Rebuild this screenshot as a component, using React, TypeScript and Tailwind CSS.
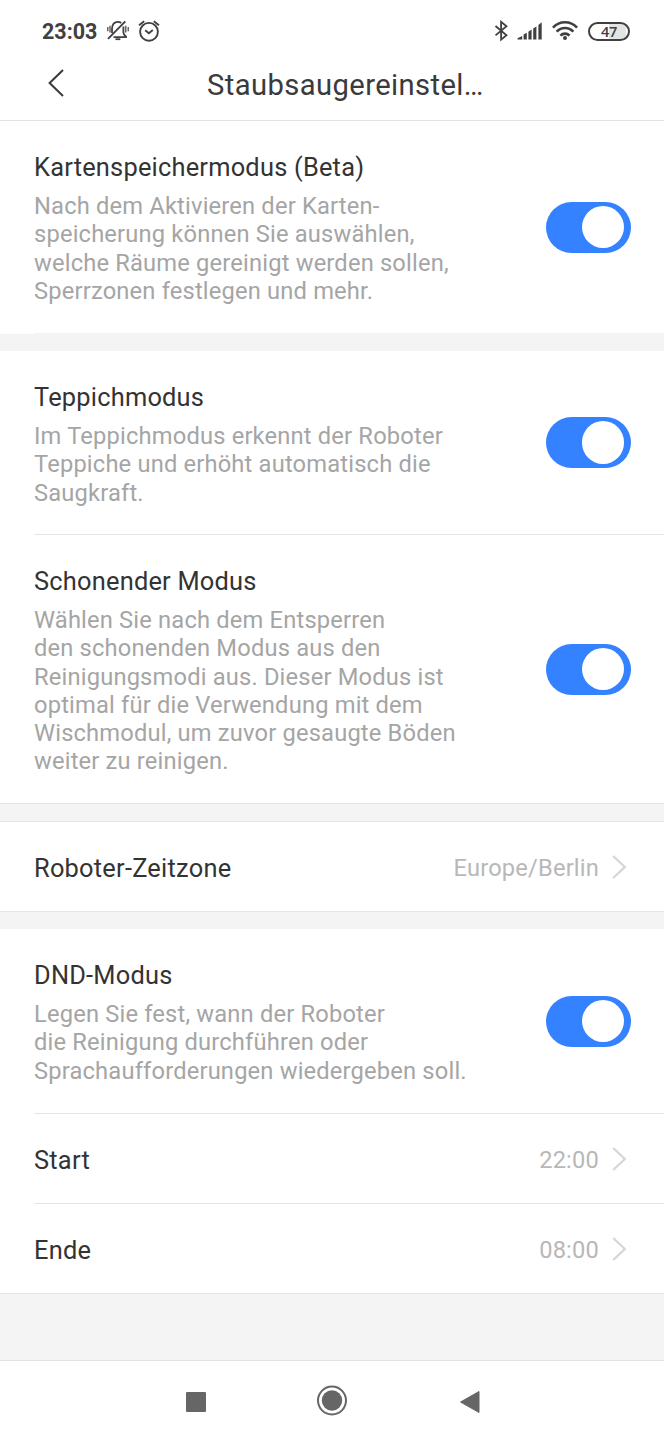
import { useState } from 'react';
import clsx from 'clsx';

interface ToggleRowProps {
  title: string;
  lines: string[];
  className?: string;
}

function Switch() {
  const [on, setOn] = useState(true);
  return (
    <button
      role="switch"
      aria-checked={on}
      onClick={() => setOn(!on)}
      className={clsx(
        'flex h-[51px] w-[84.5px] shrink-0 items-center rounded-full px-[6.5px]',
        on ? 'justify-end bg-[#3482ff]' : 'justify-start bg-[#d9d9d9]'
      )}
    >
      <span className="size-[42.5px] rounded-full bg-white" />
    </button>
  );
}

function ToggleRow({ title, lines, className }: ToggleRowProps) {
  return (
    <div className={clsx('flex items-center justify-between bg-white pr-[33.3px] pl-[34px]', className)}>
      <div className="self-start pt-[31px]">
        <h2 className="text-[25.4px] leading-[30px] tracking-[0.22px] text-[#333]">{title}</h2>
        <p className="mt-[10px] text-[23.7px] leading-[28.25px] tracking-[0.18px] whitespace-nowrap text-[#a5a5a5]">
          {lines.map((line) => (
            <span key={line} className="block">
              {line}
            </span>
          ))}
        </p>
      </div>
      <Switch />
    </div>
  );
}

function LinkRow({ title, value }: { title: string; value: string }) {
  return (
    <div className="flex h-[89px] items-center bg-white pr-[37px] pl-[34px]">
      <span className="flex-1 pt-[2px] text-[25.4px] leading-[30px] tracking-[0.24px] text-[#333]">{title}</span>
      <span className="pt-[2px] text-[23.7px] leading-[28px] tracking-[0.17px] text-[#b8b8b8]">{value}</span>
      <svg className="ml-[13px] h-6 w-[15px]" viewBox="0 0 15 24" fill="none" stroke="#d6d6d6" strokeWidth="2.3">
        <path d="M1.2 1 12.8 12 1.2 23" />
      </svg>
    </div>
  );
}

function Divider() {
  return (
    <div className="bg-white pl-[34px]">
      <div className="h-px bg-[#e5e5e5]" />
    </div>
  );
}

function StatusBar() {
  return (
    <div className="flex h-[50px] items-center pt-[12px] pr-[34px] pl-[42px] text-[#404040]">
      <span className="w-[65px] pt-px text-[21.5px] leading-[26px] font-bold">23:03</span>
      <svg className="h-[22px] w-[22px]" viewBox="0 0 22 22" fill="none" stroke="currentColor" strokeWidth="1.8">
        <path d="M1 18.8 18.3 1.3" strokeWidth="1.9" />
        <path d="M5 13V8.5C5 4.600 7.500 1.800 10.700 1.800c1.400 0 2.600.4 3.500 1.200M16.400 6.500v6c0 1.800 1 2.600 2.600 4v.6H6.500" />
        <path d="M8.500 19.200h4.800" />
        <path d="M.8 7v4.200M3 5.800v6.700M18.800 5.800v6.700M21.200 7v4.200" strokeWidth="1.2" />
      </svg>
      <svg className="ml-[9px] h-[22px] w-[22px]" viewBox="0 0 22 22" fill="none" stroke="currentColor" strokeWidth="1.9">
        <circle cx="11" cy="11.8" r="8.900" />
        <path d="m7.2 10.2 3.7 3 3.9-3.2" />
        <path d="M1 5.2 6.2 1.2M21 5.2l-5.2-4" />
      </svg>
      <div className="flex-1" />
      <svg className="h-[22px] w-[14px]" viewBox="0 0 14 22" fill="none" stroke="currentColor" strokeWidth="1.8">
        <path d="M1.5 6 12.5 15.3 7.1 19.600V1.800L12.500 6.200 1.500 15.400" />
      </svg>
      <svg className="ml-[9px] h-[22px] w-[26px]" viewBox="0 0 26 22" fill="currentColor">
        <path d="M.5 19.500v-1.200L5.200 16v3.500zM6.600 19.500v-5l3.200-1.700v6.700zM11.400 19.500v-7.800l3.200-2.100v9.900zM16.200 19.500V8.600l3.200-2.100v13zM21.400 19.500V5l3.300-2.700v17.200z" />
      </svg>
      <svg className="ml-[9px] h-[22px] w-[26px]" viewBox="0 0 26 22" fill="none" stroke="currentColor" strokeWidth="2.6">
        <path d="M.9 7.600C7.600.4 18.400.4 25.100 7.600" />
        <path d="M4.6 11.700c4.800-5 12-5 16.800 0" />
        <path d="M8.400 15.600c2.700-2.700 6.500-2.700 9.200 0" />
        <circle cx="13" cy="17.900" r="2" fill="currentColor" stroke="none" />
      </svg>
      <div className="ml-[10px] flex h-[19px] w-[42px] items-center justify-center overflow-hidden rounded-full border-2 border-[#404040] bg-[linear-gradient(90deg,#fff_50%,#e4e4e4_50%,#e4e4e4_94%,#fff_94%)]">
        <span className="font-['Open_Sans',sans-serif] text-[14.5px] leading-[15px] font-semibold tracking-[-0.4px]">47</span>
      </div>
    </div>
  );
}

export default function App() {
  return (
    <div className="flex h-[1440px] w-[664px] flex-col overflow-hidden bg-[#f4f4f4] font-[Roboto,sans-serif]">
      <header className="h-[121px] border-b border-[#e2e2e2] bg-white">
        <StatusBar />
        <div className="flex h-[70px] items-center pl-[48px]">
          <svg className="-mt-[5px] h-7 w-4" viewBox="0 0 16 28" fill="none" stroke="#3a3a3a" strokeWidth="2">
            <path d="M15 1 1.6 14 15 27" />
          </svg>
          <h1 className="ml-[143px] w-[277px] text-[29.2px] leading-9 tracking-[0.4px] whitespace-nowrap text-[#3a3a3a]">
            Staubsaugereinstel…
          </h1>
        </div>
      </header>

      <ToggleRow
        className="h-[212px]"
        title="Kartenspeichermodus (Beta)"
        lines={[
          'Nach dem Aktivieren der Karten-',
          'speicherung können Sie auswählen,',
          'welche Räume gereinigt werden sollen,',
          'Sperrzonen festlegen und mehr.',
        ]}
      />
      <div className="h-px w-[34px] bg-white" />

      <section className="mt-[17px] border-b border-[#e5e5e5]">
        <ToggleRow
          className="h-[183px]"
          title="Teppichmodus"
          lines={['Im Teppichmodus erkennt der Roboter', 'Teppiche und erhöht automatisch die', 'Saugkraft.']}
        />
        <Divider />
        <ToggleRow
          className="h-[268px]"
          title="Schonender Modus"
          lines={[
            'Wählen Sie nach dem Entsperren',
            'den schonenden Modus aus den',
            'Reinigungsmodi aus. Dieser Modus ist',
            'optimal für die Verwendung mit dem',
            'Wischmodul, um zuvor gesaugte Böden',
            'weiter zu reinigen.',
          ]}
        />
      </section>

      <section className="mt-[17px] border-y border-[#e5e5e5]">
        <LinkRow title="Roboter-Zeitzone" value="Europe/Berlin" />
      </section>

      <section className="mt-[17px] border-b border-[#e5e5e5]">
        <ToggleRow
          className="h-[184px]"
          title="DND-Modus"
          lines={[
            'Legen Sie fest, wann der Roboter',
            'die Reinigung durchführen oder',
            'Sprachaufforderungen wiedergeben soll.',
          ]}
        />
        <Divider />
        <LinkRow title="Start" value="22:00" />
        <Divider />
        <LinkRow title="Ende" value="08:00" />
      </section>

      {/* Android navigation */}
      <nav className="mt-auto flex h-20 items-center border-t border-[#e2e2e2] bg-white pl-[186px] text-[#666]">
        <span className="mt-[3px] size-5 rounded-[1px] bg-[#666]" />
        <svg className="ml-[110px] size-8" viewBox="0 0 32 32">
          <circle cx="16" cy="15.5" r="14" fill="none" stroke="currentColor" strokeWidth="2" />
          <circle cx="16" cy="15.5" r="10.2" fill="currentColor" />
        </svg>
        <svg className="mt-[3px] ml-[111px] h-6 w-[22px]" viewBox="0 0 22 24" fill="currentColor" stroke="currentColor" strokeLinejoin="round">
          <path d="M1.5 12 20 1.5v21z" />
        </svg>
      </nav>
    </div>
  );
}
